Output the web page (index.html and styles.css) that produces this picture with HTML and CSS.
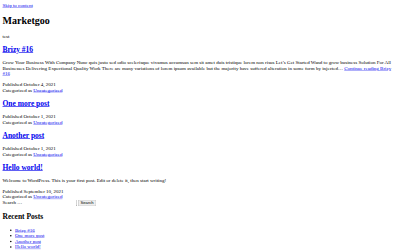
FILE: index.html
```html
<!DOCTYPE html>
<html lang="en">
<head>
    <meta charset="UTF-8">
    <meta name="viewport" content="width=device-width, initial-scale=1.0">
    <title>Marketgoo &ndash; test</title>
    <link rel="stylesheet" href="styles.css">
</head>
<body>
<div class="page">
    <a class="skip-link" href="#content">Skip to content</a>
    <header class="site-header">
        <h1 class="site-title">Marketgoo</h1>
        <p class="site-description">test</p>
    </header>

    <main id="content" class="site-main">
        <article class="post">
            <h2 class="entry-title"><a href="#">Brizy #16</a></h2>
            <p>Grow Your Business With Company Nunc quis justo sed odio scelerisque vivamus accumsan sem sit amet duis tristique lorem non risus Let&rsquo;s Get Started Wand to grow business Solution For All Businesses Delivering Expectional Quality Work There are many variations of lorem ipsum available but the majority have suffered alteration in some form by injected&hellip; <a href="#">Continue reading Brizy #16</a></p>
            <footer class="entry-meta">
                <div>Published October 4, 2021</div>
                <div>Categorized as <a href="#">Uncategorized</a></div>
            </footer>
        </article>

        <article class="post">
            <h2 class="entry-title"><a href="#">One more post</a></h2>
            <footer class="entry-meta">
                <div>Published October 1, 2021</div>
                <div>Categorized as <a href="#">Uncategorized</a></div>
            </footer>
        </article>

        <article class="post">
            <h2 class="entry-title"><a href="#">Another post</a></h2>
            <footer class="entry-meta">
                <div>Published October 1, 2021</div>
                <div>Categorized as <a href="#">Uncategorized</a></div>
            </footer>
        </article>

        <article class="post">
            <h2 class="entry-title"><a href="#">Hello world!</a></h2>
            <p>Welcome to WordPress. This is your first post. Edit or delete it, then start writing!</p>
            <footer class="entry-meta">
                <div>Published September 10, 2021</div>
                <div>Categorized as <a href="#">Uncategorized</a></div>
            </footer>
        </article>
    </main>

    <aside class="widget-area">
        <form class="search-form" role="search">
            <label for="s">Search &hellip;</label>
            <input type="search" id="s" name="s">
            <button type="submit">Search</button>
        </form>

        <section class="widget">
            <h2 class="widget-title">Recent Posts</h2>
            <ul>
                <li><a href="#">Brizy #16</a></li>
                <li><a href="#">One more post</a></li>
                <li><a href="#">Another post</a></li>
                <li><a href="#">Hello world!</a></li>
            </ul>
        </section>
    </aside>
</div>
</body>
</html>
```

FILE: styles.css
```css
html {
    overflow: hidden;
}
body {
    margin: 0;
    font-family: "Liberation Serif", "Times New Roman", serif;
    color: #000;
}
/* page was shot at 1280px wide, shown at 400 */
.page {
    width: 1264px;
    padding: 8px;
    transform: scale(0.3125);
    transform-origin: 0 0;
}
a {
    color: #0000ee;
}
.search-form input,
.search-form button {
    font-family: "Liberation Sans", Arial, sans-serif;
    font-size: 13.33px;
}
.search-form input {
    width: 170px;
}
```
